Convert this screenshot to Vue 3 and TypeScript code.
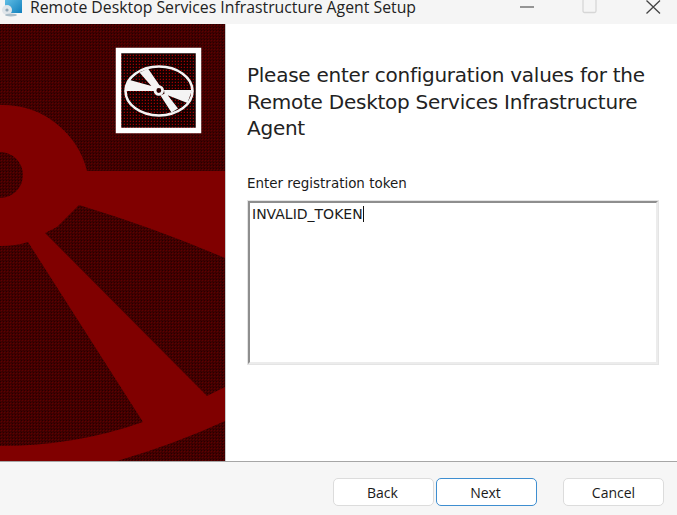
<script setup lang="ts">
const title = 'Remote Desktop Services Infrastructure Agent Setup'
const heading = 'Please enter configuration values for the Remote Desktop Services Infrastructure Agent'
const buttons = [
  { label: 'Back', cls: 'back' },
  { label: 'Next', cls: 'next' },
  { label: 'Cancel', cls: 'cancel' },
]
</script>

<template>
  <div class="window">
    <header class="titlebar">
      <svg class="app-icon" width="24" height="20" viewBox="0 0 24 20">
        <defs>
          <linearGradient id="screen" x1="0" y1="0" x2="1" y2="1">
            <stop offset="0" stop-color="#6cc6ea" />
            <stop offset="1" stop-color="#1180bd" />
          </linearGradient>
        </defs>
        <rect x="5" y="-4" width="17" height="17" fill="url(#screen)" />
        <circle cx="7" cy="10" r="5" fill="#dfe5ea" />
        <circle cx="7" cy="10" r="1.6" fill="#8fa6b6" />
        <ellipse cx="11" cy="15" rx="6" ry="1.5" fill="#a9bcc8" />
      </svg>
      <span class="title">{{ title }}</span>
      <div class="controls">
        <svg width="16" height="16" viewBox="0 0 16 16" class="ctl min"><path d="M1 7h14" stroke="#555" stroke-width="1.2" /></svg>
        <svg width="16" height="16" viewBox="0 0 16 16" class="ctl max"><rect x="1" y="-1" width="13" height="13.5" rx="1.5" fill="none" stroke="#d6d6d6" stroke-width="1.3" /></svg>
        <svg width="16" height="16" viewBox="0 0 16 16" class="ctl close"><path d="M1.5 0.5 15 13.5M15 0.5 1.5 13.5" stroke="#444" stroke-width="1.3" /></svg>
      </div>
    </header>

    <main class="body">
      <svg class="art" width="225" height="437" viewBox="0 24 225 437">
        <defs>
          <pattern id="dither" width="3" height="3" patternUnits="userSpaceOnUse">
            <rect width="3" height="3" fill="#440000" />
            <rect width="1" height="1" fill="#240000" />
            <rect x="1" y="1" width="1" height="1" fill="#5e0000" />
            <rect x="2" y="2" width="1" height="1" fill="#340000" />
          </pattern>
          <pattern id="fine" width="3" height="3" patternUnits="userSpaceOnUse">
            <rect width="3" height="3" fill="#140000" />
            <rect x="1" y="1" width="1" height="1" fill="#a00000" />
            <rect x="1" width="1" height="1" fill="#3a0000" />
            <rect y="1" width="1" height="1" fill="#3a0000" />
          </pattern>
        </defs>
        <rect x="0" y="24" width="225" height="437" fill="#800000" />
        <path fill="url(#dither)" d="M0 24H225V171H87A87 87 0 0 0 0 105Z" />
        <path fill="url(#dither)" d="M0 152A23 23 0 0 1 0 198Z" />
        <path fill="url(#dither)" d="M79 205Q155 228 225 258V387L207 396L45 233L57 227Z" />
        <path fill="url(#dither)" d="M0 246Q16 246 28 242L143 422Q75 446 0 446Z" />
        <path fill="url(#dither)" d="M225 421Q175 444 117 461H225Z" />

        <rect x="118.5" y="50.5" width="80" height="80" fill="url(#fine)" stroke="#fff" stroke-width="5.5" />
        <ellipse cx="159" cy="91" rx="33.5" ry="24.5" fill="none" stroke="#f4f4f4" stroke-width="2.6" />
        <path fill="#f4f4f4" d="M128 79.5 155 87 154 91 125.5 91ZM139.5 72.5 148 68.5 160 86 154 89ZM164 90 192 90 187.5 103 164.5 94ZM160.5 95.5 166 93 178 108.5 171.5 112.5Z" />
        <circle cx="158.8" cy="90.5" r="3.8" fill="#2a0000" stroke="#f4f4f4" stroke-width="2.8" />
      </svg>

      <section class="content">
        <h1 class="heading">{{ heading }}</h1>
        <label class="label">Enter registration token</label>
        <div class="tokenbox">INVALID_TOKEN<span class="caret"></span></div>
      </section>
    </main>

    <footer class="footer">
      <button v-for="b in buttons" :key="b.label" type="button" :class="['btn', b.cls]">{{ b.label }}</button>
    </footer>
  </div>
</template>

<style scoped>
.window {
  width: 677px;
  height: 515px;
  display: flex;
  flex-direction: column;
  overflow: hidden;
  background: #fff;
  font-family: "Noto Sans", "Open Sans", sans-serif;
  color: #1a1a1a;
}
.titlebar {
  height: 24px;
  flex: none;
  display: flex;
  align-items: flex-start;
  background: #f5f5f5;
  overflow: hidden;
}
.app-icon { flex: none; display: block; }
.title {
  margin-left: 6px;
  font-family: "Open Sans", sans-serif;
  font-size: 15.8px;
  line-height: 14px;
  white-space: nowrap;
  color: #222;
}
.controls {
  margin-left: auto;
  display: flex;
  padding-right: 16px;
}
.ctl { display: block; flex: none; }
.min { margin-right: 47px; }
.max { margin-right: 47px; }
.body {
  height: 437px;
  flex: none;
  display: flex;
  background: #fff;
}
.art {
  flex: none;
  display: block;
  border-right: 1px solid #c9c9c9;
}
.content {
  flex: 1;
  padding: 38px 18px 0 21px;
  display: flex;
  flex-direction: column;
  font-family: "DejaVu Sans", sans-serif;
}
.heading {
  margin: 0;
  font-size: 20px;
  font-weight: 400;
  line-height: 26.5px;
  letter-spacing: -0.25px;
  color: #222;
}
.label {
  margin-top: 33px;
  font-size: 13.45px;
  line-height: 18px;
}
.tokenbox {
  margin: 8px 1px 0 1px;
  height: 163px;
  box-sizing: border-box;
  border: 2px solid;
  border-color: #8e8e8e #ececec #ececec #8e8e8e;
  outline: 1px solid #e4e4e4;
  padding: 3px 2px;
  font-size: 14px;
  line-height: 16px;
}
.caret {
  display: inline-block;
  width: 1px;
  height: 16px;
  background: #111;
  vertical-align: top;
}
.footer {
  flex: 1;
  display: flex;
  align-items: flex-start;
  background: #f6f6f6;
  border-top: 1px solid #a6a6a6;
  padding: 16px 13px 0 333px;
  box-sizing: border-box;
}
.btn {
  height: 28px;
  width: 101px;
  box-sizing: border-box;
  background: #fff;
  border: 1px solid #dcdcdc;
  border-radius: 5px;
  padding: 0 2px 0 0;
  font-family: "Open Sans", sans-serif;
  font-size: 14px;
  color: #1a1a1a;
}
.next {
  margin-left: 2px;
  border: 1.5px solid #3e8ed0;
}
.cancel { margin-left: 26px; padding: 0; }
</style>

<style>
html, body { margin: 0; padding: 0; background: #fff; }
</style>
